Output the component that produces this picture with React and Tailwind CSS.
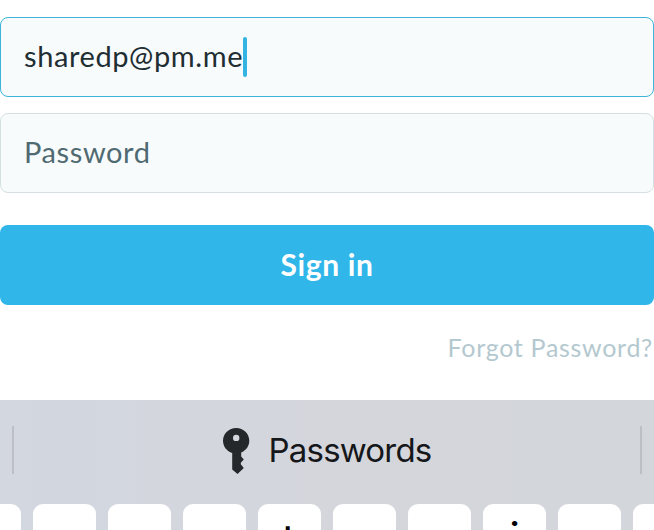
const keys = [
  { id: 0 },
  { id: 1 },
  { id: 2 },
  { id: 3 },
  { id: 4, label: "t", pad: "pt-[6px] pr-px" },
  { id: 5 },
  { id: 6 },
  { id: 7, label: "i", pad: "pt-1" },
  { id: 8 },
  { id: 9 },
];

function KeyIcon() {
  return (
    <svg className="mr-[19px] h-[46px] w-[27px] shrink-0" viewBox="0 0 27 46" fill="#25282b">
      <path
        fillRule="evenodd"
        d="M13.200 0C20.500 0 26.300 5.700 26.300 12.700C26.300 18 23 22.500 18.200 24.500V28.500L20.800 31.600L17.800 34.800V36.200L20.800 40L14.500 46L9.200 41.500V24.900C3.800 23.200 0 18.500 0 12.700C0 5.700 5.900 0 13.200 0ZM13.200 6.700A3.200 3.200 0 1 0 13.200 13.100A3.200 3.200 0 1 0 13.200 6.700Z"
      />
    </svg>
  );
}

export default function App() {
  return (
    <main className="flex h-[530px] w-[654px] flex-col overflow-hidden bg-white pt-[17px] font-['Lato',sans-serif]">
      <div className="flex h-20 shrink-0 items-center rounded-lg border border-[#3eb4d8] bg-[#f8fbfc] pl-[23px]">
        <span className="pb-[2px] text-[29px] leading-10 tracking-[0.6px] text-[#1e2e33]">sharedp@pm.me</span>
        <span className="h-10 w-1 rounded-full bg-[#34b4e3]" />
      </div>
      <div className="mt-4 flex h-20 shrink-0 items-center rounded-lg border border-[#d5e0e3] bg-[#f8fbfc] pl-[23px]">
        <span className="pb-[2px] text-[29px] leading-10 tracking-[0.6px] text-[#506a72]">Password</span>
      </div>
      <button className="mt-8 h-20 shrink-0 rounded-lg bg-[#30b6e9] pb-[2px] text-[30px] font-bold leading-10 tracking-[0.6px] text-white">
        Sign in
      </button>
      <a className="mt-6 h-9 shrink-0 self-end pr-px text-[25px] leading-9 tracking-[0.7px] text-[#b4c8d0]">
        Forgot Password?
      </a>
      <section className="mt-[35px] flex h-[130px] shrink-0 flex-col overflow-hidden bg-linear-to-r from-[#d2d7e0] via-[#d4d6dc] to-[#d3d6da] font-['Inter',sans-serif]">
        <div className="flex h-[104px] shrink-0 items-center justify-between px-3">
          <span className="mb-1 h-12 w-[2px] bg-[#bcc0c6]" />
          <div className="mb-[2px] flex items-center">
            <KeyIcon />
            <span className="pb-[2px] text-[33px] leading-10 tracking-[-0.8px] text-[#15171a]">Passwords</span>
          </div>
          <span className="mb-1 h-12 w-[2px] bg-[#bcc0c6]" />
        </div>
        <div className="-ml-[42px] flex gap-3">
          {keys.map((k) => (
            <span
              key={k.id}
              className={`flex h-[84px] w-[63px] shrink-0 justify-center rounded-[10px] bg-white text-[44px] leading-[60px] text-black ${k.pad ?? ""}`}
            >
              {k.label}
            </span>
          ))}
        </div>
      </section>
    </main>
  );
}
